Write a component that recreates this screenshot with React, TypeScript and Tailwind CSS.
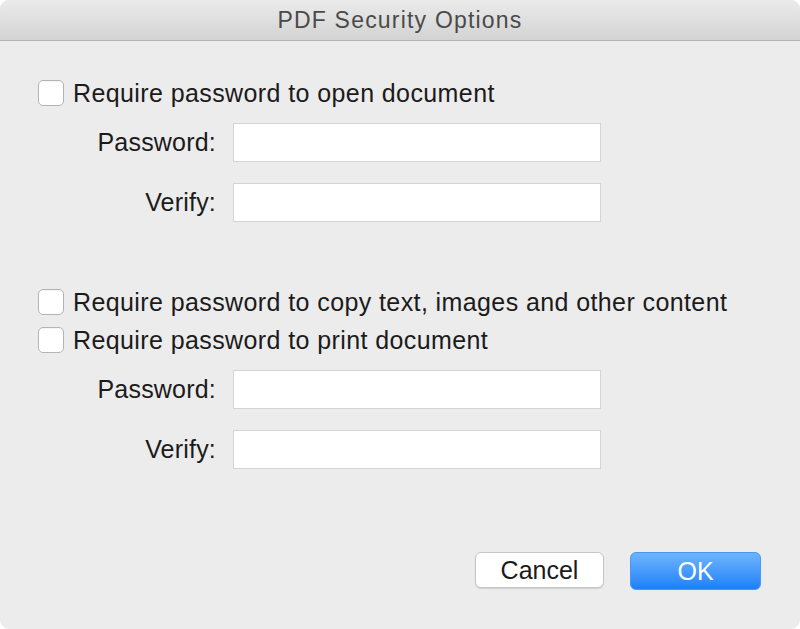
import React from 'react';

function Check({ label }: { label: string }) {
  return (
    <label className="flex items-center h-[26px] gap-[9px]">
      <span className="w-[26px] h-[26px] rounded-[5px] bg-white border border-[#b4b4b4] shadow-[inset_0_1px_0_rgba(0,0,0,0.04)]" />
      <span className="text-[25px] tracking-[0.4px] leading-none text-[#1b1b1b]">{label}</span>
    </label>
  );
}

function Field({ label }: { label: string }) {
  return (
    <div className="flex items-center h-[39px]">
      <span className="w-[178px] text-right text-[25px] tracking-[0.2px] leading-none text-[#1b1b1b]">{label}</span>
      <div className="ml-[17px] w-[368px] h-[39px] bg-white border border-[#d4d4d4]" />
    </div>
  );
}

export default function App() {
  return (
    <div
      className="w-[800px] h-[629px] bg-[#ececec] rounded-[9px] overflow-hidden flex flex-col"
      style={{ fontFamily: '"Liberation Sans", Arial, sans-serif' }}
    >
      {/* Title bar */}
      <div className="h-[41px] shrink-0 flex items-center justify-center bg-gradient-to-b from-[#ebebeb] to-[#d3d3d3] border-b border-[#b3b3b3]">
        <span className="text-[23px] tracking-[1.2px] text-[#4a4a4a] leading-none">PDF Security Options</span>
      </div>

      <div className="flex flex-col pl-[38px] pt-[39px]">
        <Check label="Require password to open document" />
        <div className="flex flex-col gap-[21px] mt-[17px]">
          <Field label="Password:" />
          <Field label="Verify:" />
        </div>

        <div className="mt-[67px] flex flex-col gap-[12px]">
          <Check label="Require password to copy text, images and other content" />
          <Check label="Require password to print document" />
        </div>
        <div className="flex flex-col gap-[21px] mt-[17px]">
          <Field label="Password:" />
          <Field label="Verify:" />
        </div>
      </div>

      <div className="mt-auto mb-[39px] flex justify-end gap-[26px] pr-[39px]">
        <button className="w-[129px] h-[36px] rounded-[6px] bg-white border border-[#c6c6c6] shadow-[0_1px_1px_rgba(0,0,0,0.12)] text-[25px] leading-none text-[#1b1b1b]">
          Cancel
        </button>
        <button className="w-[131px] h-[38px] rounded-[6px] bg-gradient-to-b from-[#6db4fb] to-[#1a80fb] border border-[#4a97f6] text-[25px] leading-none text-white">
          OK
        </button>
      </div>
    </div>
  );
}
